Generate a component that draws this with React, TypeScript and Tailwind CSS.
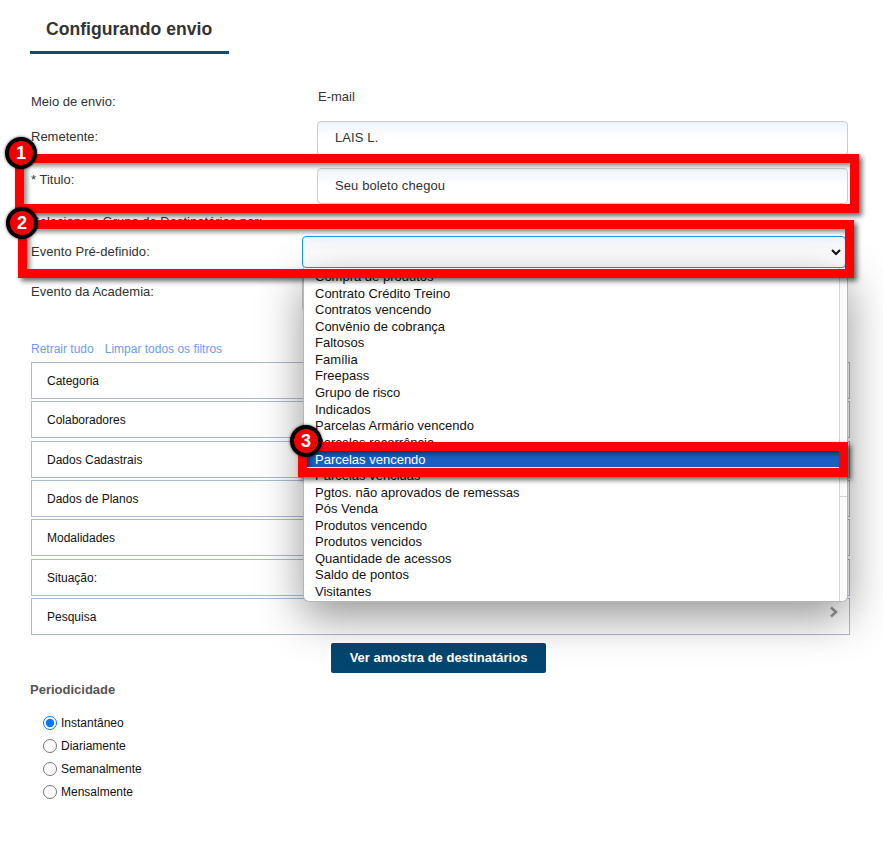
const sections = ["Categoria", "Colaboradores", "Dados Cadastrais", "Dados de Planos", "Modalidades", "Situação:", "Pesquisa"];

const eventos = [
  "Compra de produtos",
  "Contrato Crédito Treino",
  "Contratos vencendo",
  "Convênio de cobrança",
  "Faltosos",
  "Família",
  "Freepass",
  "Grupo de risco",
  "Indicados",
  "Parcelas Armário vencendo",
  "Parcelas recorrência",
  "Parcelas vencendo",
  "Parcelas vencidas",
  "Pgtos. não aprovados de remessas",
  "Pós Venda",
  "Produtos vencendo",
  "Produtos vencidos",
  "Quantidade de acessos",
  "Saldo de pontos",
  "Visitantes",
];

const periodos = ["Instantâneo", "Diariamente", "Semanalmente", "Mensalmente"];

function Badge({ n, className }: { n: number; className: string }) {
  return (
    <div
      className={`absolute z-30 flex h-[32px] w-[32px] items-center justify-center rounded-full border-[4px] border-black bg-[#f00000] text-[18px] font-bold text-white shadow-[0_0_3px_rgba(0,0,0,0.7)] ${className}`}
    >
      {n}
    </div>
  );
}

export default function App() {
  return (
    <div className="relative h-[856px] w-[883px] overflow-hidden bg-white font-['Liberation_Sans',Arial,sans-serif] text-[13px] text-[#333]">
      <div className="ml-[30px] w-[199px] border-b-[3px] border-[#0f4c75] pb-[11px] pl-[16px] pt-[19px]">
        <h1 className="text-[17.6px] font-bold leading-[21px] text-[#333]">Configurando envio</h1>
      </div>

      <div className="pl-[31px] pr-[35px]">
        <div className="mt-[36px] flex h-[31px]">
          <span className="mt-[4px] w-[287px] leading-[16px]">Meio de envio:</span>
          <span className="mt-[-1px] leading-[16px]">E-mail</span>
        </div>

        <div className="flex h-[47px]">
          <span className="mt-[8px] w-[286px] leading-[16px]">Remetente:</span>
          <div className="flex h-[35px] w-[531px] items-center rounded-[4px] border border-[#ccc] bg-gradient-to-b from-[#eef3fb] to-white to-50% pb-[2px] pl-[17px] tracking-[0.1px]">
            LAIS L.
          </div>
        </div>

        <div className="flex h-[46px]">
          <span className="mt-[4px] w-[286px] leading-[16px]">* Titulo:</span>
          <div className="flex h-[36px] w-[531px] items-center rounded-[4px] border border-[#ccc] bg-gradient-to-b from-[#eef3fb] to-white to-50% pl-[17px] tracking-[0.1px]">
            Seu boleto chegou
          </div>
        </div>

        <div className="h-[22px] leading-[16px]">Selecione o Grupo de Destinatários por:</div>

        <div className="flex h-[40px] items-start">
          <span className="mt-[8px] w-[271px] leading-[16px] tracking-[0.05px]">Evento Pré-definido:</span>
          <div className="flex h-[32px] w-[544px] items-center justify-end rounded-[4px] border border-[#1a9be8] bg-gradient-to-b from-[#eef3fb] to-white to-50% pr-[3px]">
            <svg width="12" height="8" viewBox="0 0 12 8" className="text-[#111]">
              <path d="M2 2l4 4 4-4" fill="none" stroke="currentColor" strokeWidth="2" />
            </svg>
          </div>
        </div>

        <div className="flex h-[66px] items-start">
          <span className="mt-[8px] w-[271px] leading-[16px]">Evento da Academia:</span>
          <div className="h-[36px] w-[544px] rounded-[4px] border border-[#ccc]" />
        </div>

        <div className="flex h-[20px] gap-[11px] text-[12px] leading-[14px] text-[#6d9bf1]">
          <span>Retrair tudo</span>
          <span>Limpar todos os filtros</span>
        </div>

        <div className="flex w-[819px] flex-col gap-[2.33px]">
          {sections.map((s) => (
            <div key={s} className="flex h-[37px] items-center justify-between border border-[#a9bbd1] pl-[15px] pr-[10px] text-[12px] text-[#111]">
              <span className="pt-[1px]">{s}</span>
              <svg width="10" height="12" viewBox="0 0 10 12" className="mb-[9px] text-[#999]">
                <path d="M2 1.5L7 6l-5 4.5" fill="none" stroke="currentColor" strokeWidth="2.6" />
              </svg>
            </div>
          ))}
        </div>

        <div className="mt-[8px] flex w-[815px] justify-center">
          <button className="h-[30px] w-[215px] rounded-[2px] bg-[#03466f] text-[13px] font-bold text-white">
            Ver amostra de destinatários
          </button>
        </div>
      </div>

      <div className="pl-[30px]">
        <h2 className="mt-[9px] text-[13px] font-bold leading-[16px] text-[#555]">Periodicidade</h2>
        <div className="mt-[17px] flex flex-col gap-[7px] pl-[13px]">
          {periodos.map((p, i) => (
            <label key={p} className="flex h-[16px] items-center gap-[4px] text-[12px] text-[#111]">
              <input type="radio" name="periodo" defaultChecked={i === 0} className="m-0 h-[14px] w-[14px] accent-[#0075ff]" />
              {p}
            </label>
          ))}
        </div>
      </div>

      {/* lista aberta do select */}
      <div className="absolute left-[303px] top-[268px] z-10 flex h-[334px] w-[545px] overflow-hidden rounded-b-[6px] border border-t-0 border-[#b5b5b5] bg-white shadow-[0_15px_45px_rgba(0,0,0,0.42)]">
        <ul className="flex-1 pt-[1px] leading-[16.58px] text-[#111]">
          {eventos.map((e) => (
            <li key={e} className="pl-[11px]">{e}</li>
          ))}
        </ul>
        <div className="w-[8px] border-l border-[#d4d4d4] bg-[#fafafa]">
          <div className="h-[229px] border-b border-[#d4d4d4]" />
        </div>
      </div>

      {/* anotações do tutorial */}
      <div className="absolute left-[15px] top-[154px] z-20 h-[59px] w-[844px] border-[9px] border-[#f00] shadow-[3px_3px_5px_rgba(0,0,0,0.6),inset_3px_3px_5px_rgba(0,0,0,0.45)]" />
      <div className="absolute left-[18px] top-[220px] z-20 h-[58px] w-[836px] border-[9px] border-[#f00] shadow-[3px_3px_5px_rgba(0,0,0,0.6),inset_3px_3px_5px_rgba(0,0,0,0.45)]" />
      <div className="absolute left-[298px] top-[442px] z-20 flex h-[35px] w-[550px] border-[9px] border-[#f00] bg-[#1a5fc4] pl-[8px] text-[13px] leading-[18px] text-white shadow-[3px_3px_5px_rgba(0,0,0,0.6),inset_0_-1px_0_#e8e8e8,inset_3px_3px_5px_rgba(0,0,0,0.45)]">
        Parcelas vencendo
      </div>
      <Badge n={1} className="left-[5px] top-[137px]" />
      <Badge n={2} className="left-[6px] top-[207px]" />
      <Badge n={3} className="left-[290px] top-[425px]" />
    </div>
  );
}
